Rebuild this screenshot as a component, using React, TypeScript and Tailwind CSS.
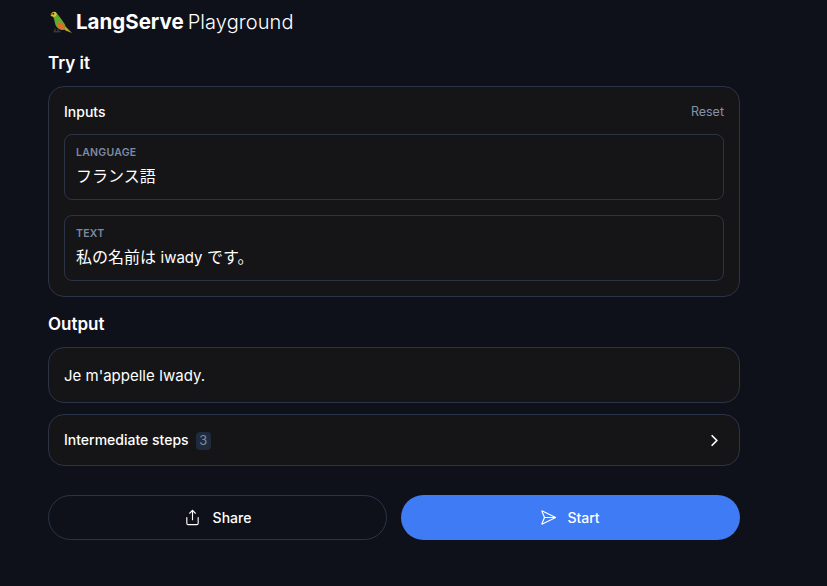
import { ChevronRight, Send, Share } from "lucide-react";

const font = { fontFamily: "Inter, 'Noto Sans CJK JP', sans-serif" };

const Parrot = () => (
  <svg width="22" height="22" viewBox="0 0 22 22" className="mt-[-1px] ml-[2px] shrink-0">
    <path d="M5 17.500v2.800M8 18v2.300M3.500 20.800h7" stroke="#4b4a42" strokeWidth="1" fill="none" />
    <path d="M14 14l8 8-6.500-2.500-3.500-3z" fill="#b9a52a" />
    <path d="M1 3.500C1.500.8 5 .2 6.500 2c2.800 3.200 5.500 7 8.500 11.500.6 1.700.3 3.500-.5 5-3.300 1.200-7.500-.5-9-4.500C4.600 11 4.300 8 3 5.500z" fill="#64a830" />
    <path d="M8 11.500c2.500-.5 5 .8 6.500 3 .5 1.200.3 2.800-.4 4-2.600.6-5.300-.4-6.900-2.700C6.900 14 7 12.500 8 11.500z" fill="#d8702c" />
    <path d="M.8 4.500C1 1.300 4.500-.3 6.300 1.800 7 3 6.500 5 5 5.700 3.800 6 3 5.300 2.500 5.500 1.800 5.600 1.200 5.200.8 4.500z" fill="#d9c53c" />
    <circle cx="3.300" cy="2.700" r="1" fill="#33271a" />
    <path d="M.8 4.500c-.4-1 0-2 .7-2.800l1 1.600z" fill="#c4552e" />
  </svg>
);

const Field = ({ label, children }: { label: string; children: React.ReactNode }) => (
  <div className="h-[66px] rounded-lg border border-[#2a3446] px-[11px] pt-[10px]">
    <div className="text-[10.5px] leading-[16px] font-semibold uppercase tracking-[0.25px] text-[#7c8aa3]">{label}</div>
    <div className="mt-[3px] text-base leading-[24px] text-white">{children}</div>
  </div>
);

export default function App() {
  return (
    <div className="h-[586px] overflow-hidden bg-[#0f111a] pl-12 text-white" style={font}>
      <div className="w-[692px]">
        <h1 className="flex h-[44px] items-center gap-[4px] text-[20.5px]">
          <Parrot />
          <span className="font-bold">LangServe</span>
          <span className="text-[20px] font-light tracking-[0.1px]">Playground</span>
        </h1>

        <h2 className="mt-[9px] text-[17px] leading-[20px] font-semibold">Try it</h2>

        <section className="mt-[13px] h-[211px] rounded-2xl border border-[#2a3446] bg-[#151517] px-[15px] pt-[15px]">
          <div className="flex items-center justify-between leading-[20px]">
            <span className="text-sm font-medium">Inputs</span>
            <span className="text-[12.5px] text-[#8592a8]">Reset</span>
          </div>
          <div className="mt-[12px] flex flex-col gap-[15px]">
            <Field label="Language">フランス語</Field>
            <Field label="Text">
              私の名前は <span className="text-[15px]">iwady</span> です。
            </Field>
          </div>
        </section>

        <h2 className="mt-[17px] text-[17px] leading-[20px] font-semibold">Output</h2>

        <div className="mt-[13px] flex h-[56px] items-center rounded-2xl border border-[#2a3446] bg-[#151517] px-[15px] pt-[2px] text-[15px]">
          Je m'appelle Iwady.
        </div>

        <div className="mt-[11px] flex h-[52px] items-center justify-between rounded-2xl border border-[#2a3446] bg-[#151517] pr-[15px] pl-[15px]">
          <div className="flex items-center gap-[7px]">
            <span className="text-sm font-medium">Intermediate steps</span>
            <span className="mt-[2px] flex h-[18px] w-[15px] items-center justify-center rounded bg-[#1f2a3d] text-[13px] text-[#7c8aa3]">3</span>
          </div>
          <ChevronRight size={19} strokeWidth={2.2} />
        </div>

        <div className="mt-[29px] grid grid-cols-2 gap-[14px]">
          <button className="flex h-[45px] items-center justify-center gap-[12px] rounded-full border border-[#2a3446] text-sm font-medium">
            <Share size={17} strokeWidth={1.6} />
            Share
          </button>
          <button className="flex h-[45px] items-center justify-center gap-[13px] rounded-full bg-[#3e7bf5] text-sm font-medium">
            <Send size={17} strokeWidth={1.7} className="ml-[-4px] rotate-45" />
            Start
          </button>
        </div>
      </div>
    </div>
  );
}
